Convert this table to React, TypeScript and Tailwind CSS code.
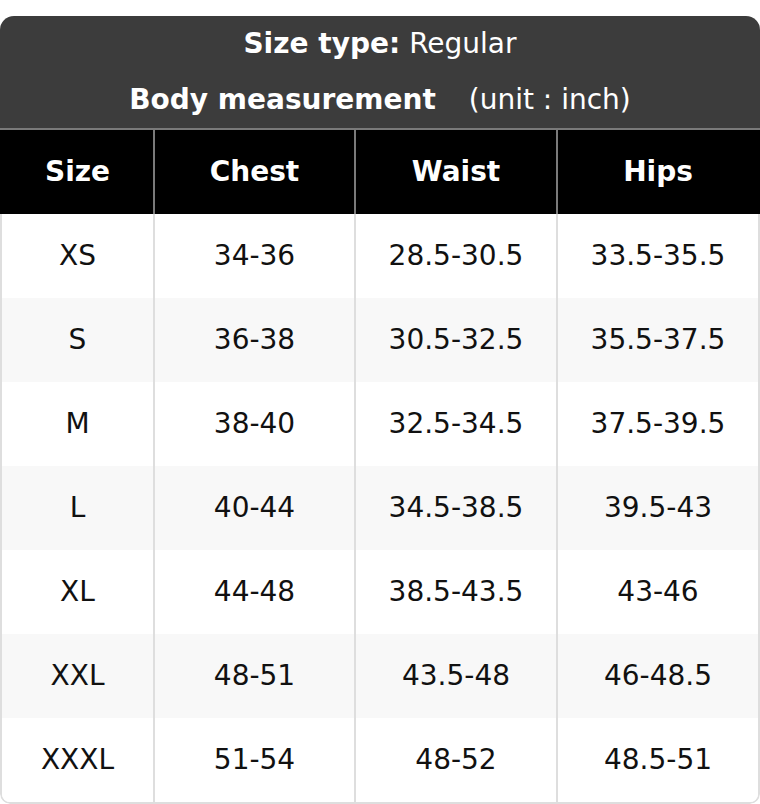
import React from "react";

const rows = [
  ["XS", "34-36", "28.5-30.5", "33.5-35.5"],
  ["S", "36-38", "30.5-32.5", "35.5-37.5"],
  ["M", "38-40", "32.5-34.5", "37.5-39.5"],
  ["L", "40-44", "34.5-38.5", "39.5-43"],
  ["XL", "44-48", "38.5-43.5", "43-46"],
  ["XXL", "48-51", "43.5-48", "46-48.5"],
  ["XXXL", "51-54", "48-52", "48.5-51"],
];

const headers = ["Size", "Chest", "Waist", "Hips"];

export default function App() {
  return (
    <div className="w-[760px] pt-4 bg-white" style={{ fontFamily: '"DejaVu Sans", sans-serif' }}>
      <div className="rounded-t-[14px] rounded-b-[10px] overflow-hidden">
        <div className="bg-[#3c3c3c] text-white text-[28px]">
          <div className="h-[56px] flex items-center justify-center">
            <span className="font-bold">Size type:</span>
            <span className="ml-[9px]">Regular</span>
          </div>
          <div className="h-[56px] flex items-center justify-center">
            <span className="font-bold">Body measurement</span>
            <span className="ml-[33px]">(unit : inch)</span>
          </div>
        </div>
        <div className="h-[2px] bg-[#7a7a7a]" />
        <div className="grid grid-cols-[151px_201px_202px_1fr] h-[84px] bg-black border-x-2 border-black text-white text-[28px] font-bold">
          {headers.map((h, i) => (
            <div
              key={h}
              className={
                i === 0
                  ? "flex items-center justify-center"
                  : "flex items-center justify-center border-l-2 border-[#7a7a7a]"
              }
            >
              {h}
            </div>
          ))}
        </div>
        <div className="border-x-2 border-b-2 border-[#dedede] rounded-b-[10px] overflow-hidden">
          {rows.map((r, ri) => (
            <div
              key={r[0]}
              className={
                ri % 2 === 1
                  ? "grid grid-cols-[151px_201px_202px_1fr] h-[84px] bg-[#f8f8f8] text-[#111] text-[28px]"
                  : "grid grid-cols-[151px_201px_202px_1fr] h-[84px] bg-white text-[#111] text-[28px]"
              }
            >
              {r.map((c, ci) => (
                <div
                  key={ci}
                  className={
                    ci === 0
                      ? "flex items-center justify-center"
                      : "flex items-center justify-center border-l-2 border-[#dedede]"
                  }
                >
                  {c}
                </div>
              ))}
            </div>
          ))}
        </div>
      </div>
    </div>
  );
}
